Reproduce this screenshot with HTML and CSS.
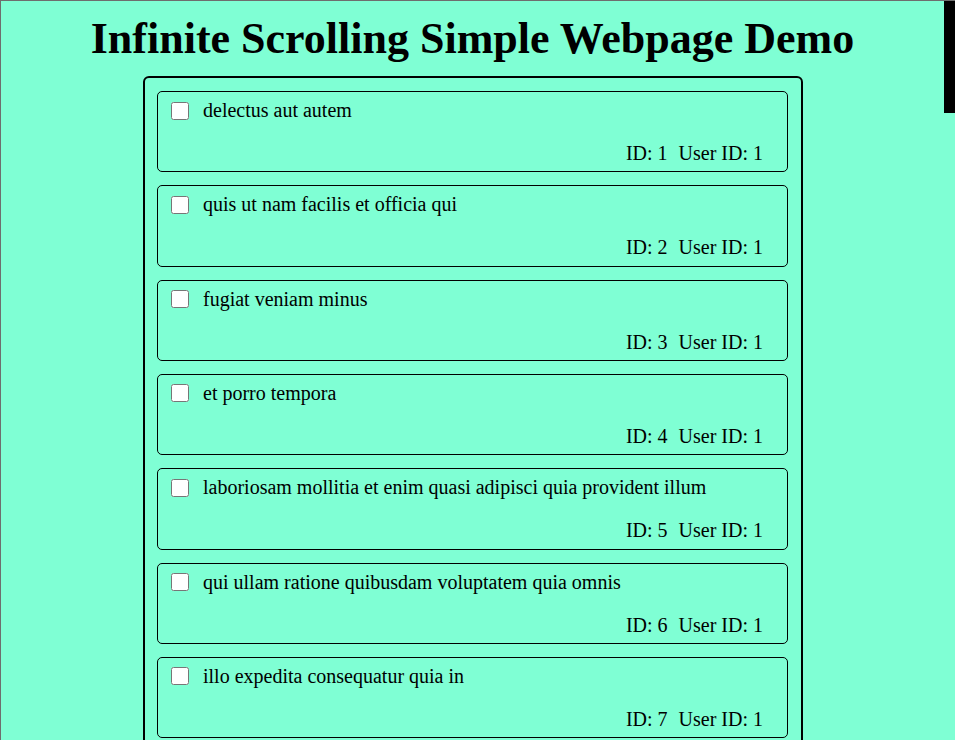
FILE: index.html
```html
<!DOCTYPE html>
<html lang="en">
<head>
    <meta charset="UTF-8">
    <meta name="viewport" content="width=device-width, initial-scale=1.0">
    <title>Infinite Scrolling Simple Webpage Demo</title>
    <link rel="stylesheet" href="styles.css">
</head>
<body>
    <h1>Infinite Scrolling Simple Webpage Demo</h1>

    <div class="todo-list" id="todoList"></div>

    <div class="scroll-thumb"></div>

    <script>
        const todoList = document.getElementById('todoList');

        const titles = [
            'delectus aut autem',
            'quis ut nam facilis et officia qui',
            'fugiat veniam minus',
            'et porro tempora',
            'laboriosam mollitia et enim quasi adipisci quia provident illum',
            'qui ullam ratione quibusdam voluptatem quia omnis',
            'illo expedita consequatur quia in',
            'quo adipisci enim quam ut ab',
            'molestiae perspiciatis ipsa',
            'illo est ratione doloremque quia maiores aut',
            'vero rerum temporibus dolor',
            'ipsa repellendus fugit nisi',
            'et doloremque nulla',
            'repellendus sunt dolores architecto voluptatum',
            'ab voluptatum amet voluptas',
            'accusamus eos facilis sint et aut voluptatem',
            'quo laboriosam deleniti aut qui',
            'dolorum est consequatur ea mollitia in culpa',
            'molestiae ipsa aut voluptatibus pariatur dolor nihil',
            'ullam nobis libero sapiente ad optio sint'
        ];

        // Pinta una tarjeta por cada tarea
        function renderTodo(todo) {
            const item = document.createElement('div');
            item.className = 'todo';
            item.innerHTML = `
                <label class="todo-title">
                    <input type="checkbox" class="todo-check">
                    <span>${todo.title}</span>
                </label>
                <div class="todo-meta">
                    <span>ID: ${todo.id}</span>
                    <span>User ID: ${todo.userId}</span>
                </div>`;
            todoList.appendChild(item);
        }

        titles.forEach((title, i) => {
            renderTodo({ id: i + 1, userId: 1, title });
        });
    </script>
</body>
</html>
```

FILE: styles.css
```css
html {
    background-color: aquamarine;
    border-top: 1px solid #6e6e6e;
    border-left: 1px solid #6e6e6e;
}
body {
    font-family: "Liberation Serif", "Times New Roman", serif;
    background-color: aquamarine;
    color: black;
    margin: 0;
    padding: 12px 11px 0 0;
}
h1 {
    font-size: 44px;
    line-height: 52px;
    text-align: center;
    margin: 0 0 11px;
}
.todo-list {
    width: 656px;
    margin: 0 auto;
    padding: 13px 0 13px;
    border: 2px solid black;
    border-radius: 6px;
    display: flex;
    flex-direction: column;
    align-items: center;
    gap: 13px;
}
.todo {
    box-sizing: border-box;
    width: 631px;
    height: 81.33px;
    border: 1px solid black;
    border-radius: 5px;
    padding-top: 7px;
    font-size: 20px;
    line-height: 23px;
}
.todo-title {
    display: flex;
    align-items: center;
    gap: 14px;
    padding-left: 13px;
}
.todo-check {
    width: 18px;
    height: 18px;
    margin: 0;
}
.todo-meta {
    display: flex;
    justify-content: flex-end;
    gap: 11px;
    padding-right: 24px;
    margin-top: 20px;
}
.scroll-thumb {
    position: fixed;
    top: 1px;
    right: 0;
    width: 11px;
    height: 112px;
    background-color: black;
}
```
